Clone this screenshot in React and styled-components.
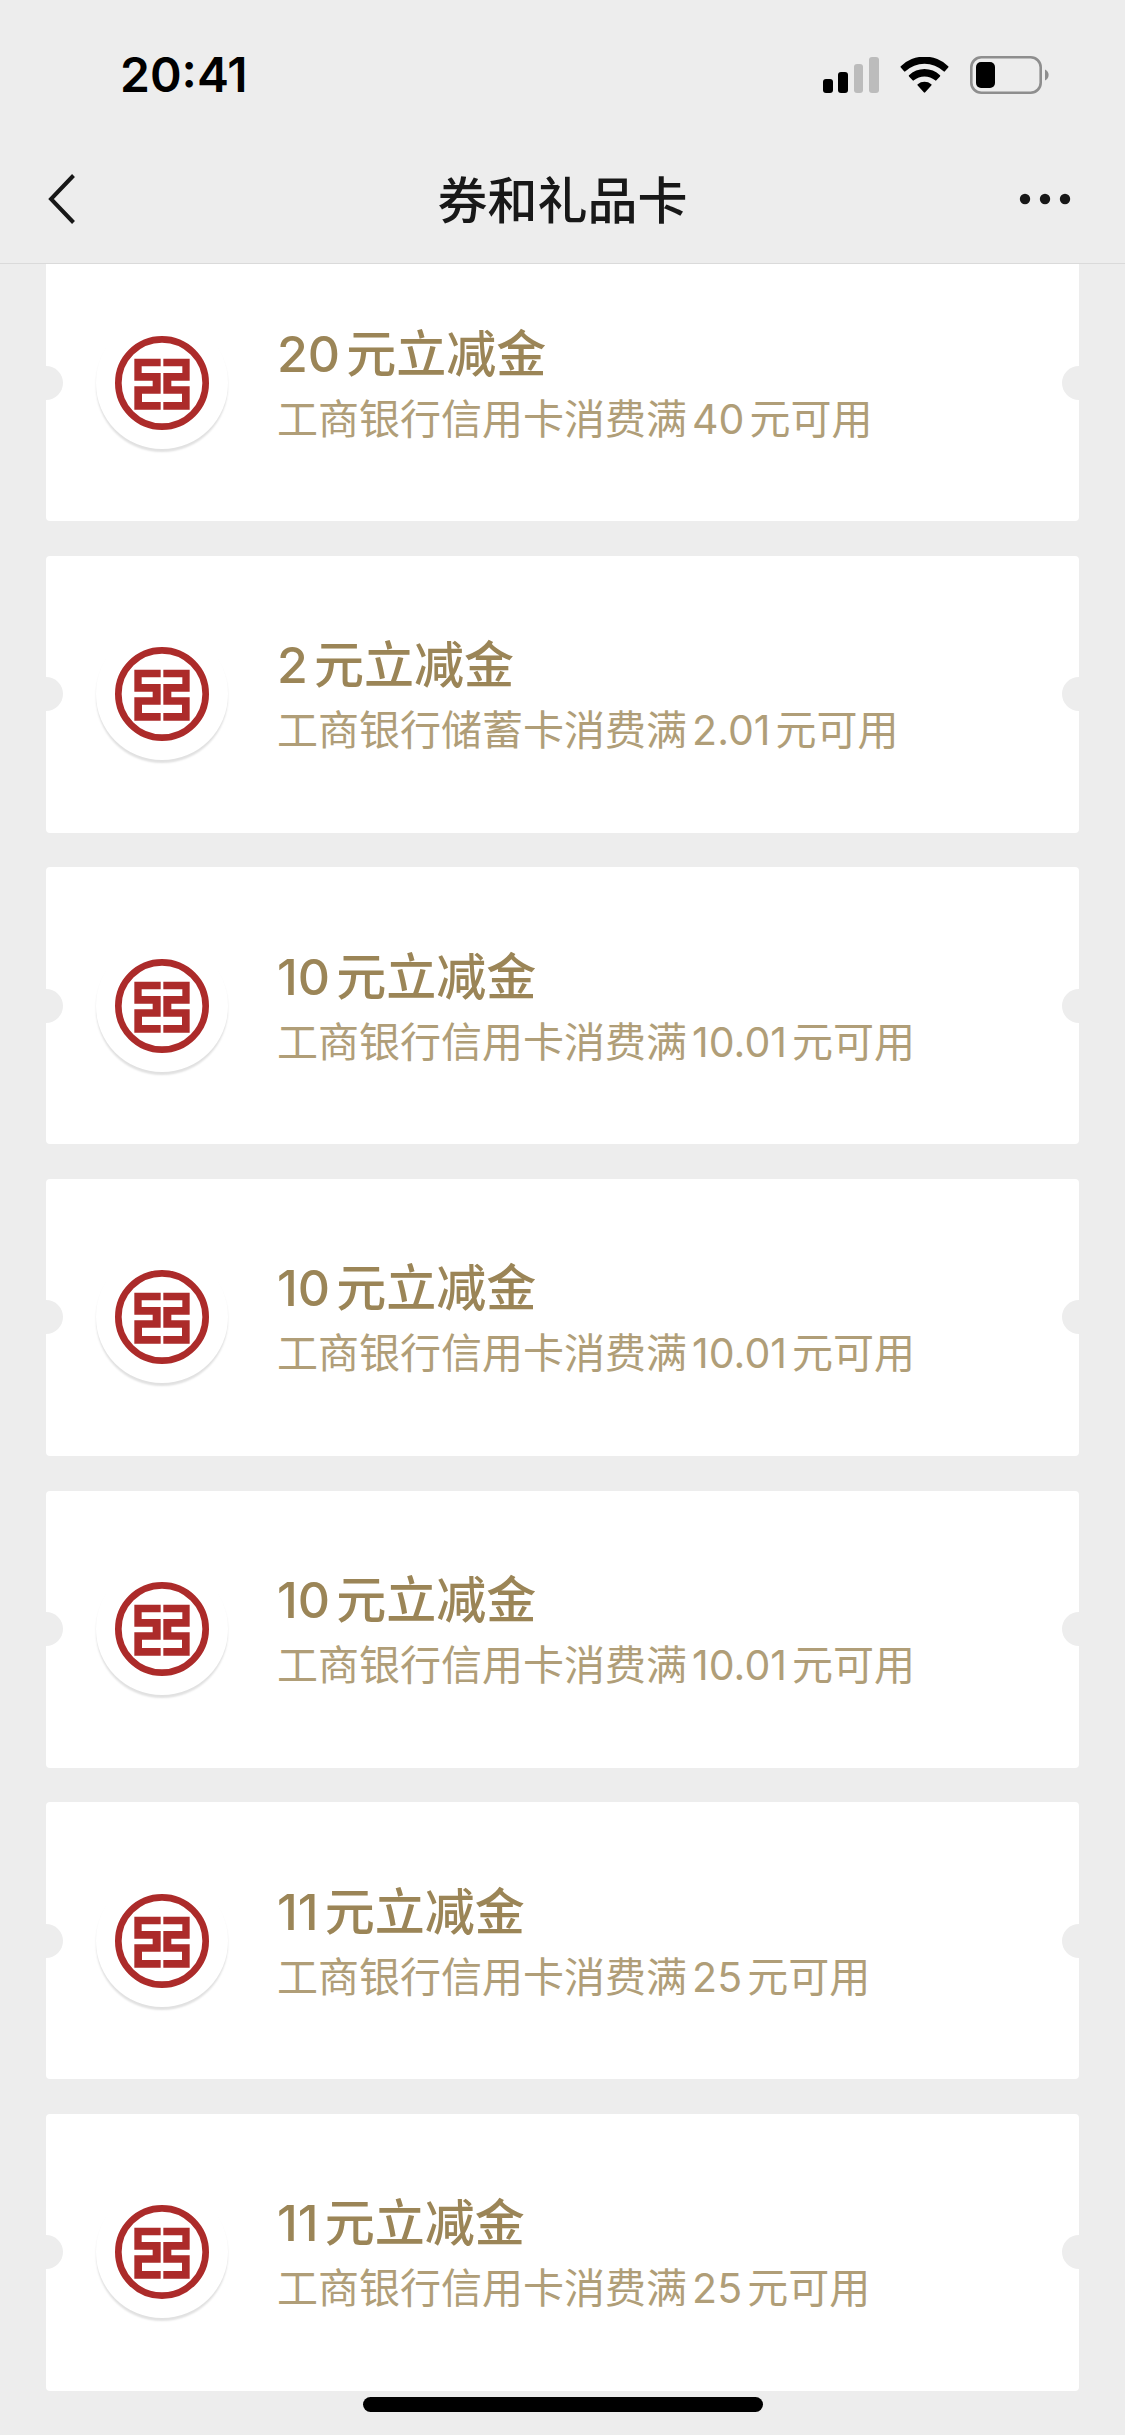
import React from "react";
import styled, { createGlobalStyle } from "styled-components";

const GlobalStyle = createGlobalStyle`
  * { box-sizing: border-box; }
  html, body { margin: 0; padding: 0; }
  body {
    background: #ededed;
    color: #181818;
    font-family: Inter, "Noto Sans CJK SC", sans-serif;
    text-autospace: normal;
  }
`;

const Screen = styled.div`
  display: flex;
  flex-direction: column;
  min-height: 100vh;
  background: #ededed;
`;

const Header = styled.header`
  border-bottom: 1px solid #dadada;
`;

const StatusBar = styled.div`
  display: flex;
  align-items: center;
  justify-content: space-between;
  height: 135px;
  padding: 14px 76px 0 120px;
  color: #000;
`;

const Clock = styled.time`
  font-size: 48px;
  line-height: 60px;
  font-weight: 600;
`;

const StatusIcons = styled.div`
  display: flex;
  align-items: center;
  gap: 21px;

  svg { display: block; }
`;

const NavBar = styled.nav`
  display: grid;
  grid-template-columns: 120px 1fr 120px;
  align-items: center;
  height: 128px;
`;

const NavButton = styled.button`
  display: flex;
  align-items: center;
  justify-content: ${(p) => p.$align};
  height: 100%;
  padding: 0 54px 0 48px;
  border: 0;
  background: none;
  color: #181818;
  cursor: pointer;

  svg { display: block; flex: none; }
`;

const PageTitle = styled.h1`
  margin: 0;
  padding-top: 4px;
  text-align: center;
  font-size: 50px;
  line-height: 64px;
  font-weight: 500;
`;

const CouponList = styled.ul`
  flex: 1;
  display: flex;
  flex-direction: column;
  justify-content: space-between;
  margin: 0;
  padding: 0 46px;
  list-style: none;
  overflow: hidden;
`;

const Coupon = styled.li`
  position: relative;
  display: flex;
  align-items: center;
  gap: 49px;
  height: 277px;
  padding: 0 50px;
  border-radius: 4px;
  background: #fff;
  overflow: hidden;

  &:first-child { margin-top: -20px; }

  &::before,
  &::after {
    content: "";
    position: absolute;
    top: 50%;
    width: 34px;
    height: 34px;
    margin-top: -17px;
    border-radius: 50%;
    background: #ededed;
  }
  &::before { left: -17px; }
  &::after { right: -17px; }
`;

const Badge = styled.div`
  display: flex;
  flex: none;
  align-items: center;
  justify-content: center;
  width: 132px;
  height: 132px;
  border-radius: 50%;
  background: #fff;
  box-shadow: 0 3px 2px rgba(0, 0, 0, 0.12);

  svg { display: block; }
`;

const CouponText = styled.div`
  flex: 1;
  min-width: 0;
  padding-top: 6px;
`;

const CouponTitle = styled.h2`
  margin: 0;
  color: #9b8557;
  font-size: 50px;
  line-height: 66px;
  font-weight: 500;
`;

const CouponRule = styled.p`
  margin: 0;
  color: #b09e78;
  font-size: 41px;
  line-height: 64px;
  font-weight: 400;
`;

const Footer = styled.footer`
  display: flex;
  justify-content: center;
  padding: 6px 0 23px;
`;

const HomeIndicator = styled.div`
  width: 400px;
  height: 15px;
  border-radius: 8px;
  background: #000;
`;

const SignalIcon = () => (
  <svg width="56" height="36" viewBox="0 0 56 36" aria-hidden="true">
    <rect x="0" y="22" width="10" height="14" rx="3" />
    <rect x="15" y="15" width="10" height="21" rx="3" />
    <rect x="31" y="7" width="9" height="29" rx="3" fill="#bcbcbc" />
    <rect x="46" y="0" width="10" height="36" rx="3" fill="#bcbcbc" />
  </svg>
);

const WifiIcon = () => (
  <svg width="49" height="36" viewBox="0 0 49 36" aria-hidden="true">
    <path d="M0.8 9.2a34 34 0 0 1 47.4 0 .8 .8 0 0 1 0 1.2l-3.3 3.9a.9 .9 0 0 1-1.3 0a28 28 0 0 0-38.2 0a.9 .9 0 0 1-1.3 0l-3.3-3.9a.8 .8 0 0 1 0-1.2z" />
    <path d="M9 18.2a22.5 22.5 0 0 1 31 0 .9 .9 0 0 1 0 1.2l-3.6 3.9a.9 .9 0 0 1-1.3 0a16.5 16.5 0 0 0-21.2 0a.9 .9 0 0 1-1.3 0L9 19.4a.9 .9 0 0 1 0-1.2z" />
    <path d="M17.7 27.2a10.8 10.8 0 0 1 13.6 0 .9 .9 0 0 1 0 1.3l-6.1 6.7a.9 .9 0 0 1-1.4 0l-6.1-6.7a.9 .9 0 0 1 0-1.3z" />
  </svg>
);

const BatteryIcon = () => (
  <svg width="79" height="38" viewBox="0 0 79 38" aria-hidden="true">
    <rect x="1.3" y="1.3" width="69.4" height="35.4" rx="10" fill="none" stroke="#8e8e8e" strokeWidth="2.6" />
    <rect x="6" y="6" width="19" height="26" rx="5" />
    <path d="M75 13.5v11a6 6 0 0 0 0-11z" fill="#8e8e8e" />
  </svg>
);

const BackIcon = () => (
  <svg width="28" height="50" viewBox="0 0 28 50" aria-hidden="true">
    <path d="M25.5 1.5L3 25l22.5 23.5" fill="none" stroke="currentColor" strokeWidth="4" />
  </svg>
);

const MoreIcon = () => (
  <svg width="52" height="12" viewBox="0 0 52 12" aria-hidden="true" fill="currentColor">
    <circle cx="6" cy="6" r="5.2" />
    <circle cx="26" cy="6" r="5.2" />
    <circle cx="46" cy="6" r="5.2" />
  </svg>
);

const BankLogo = () => (
  <svg width="94" height="94" viewBox="-141 -141 282 282" role="img" aria-label="工商银行">
    <circle r="131" fill="none" stroke="#ac2b2a" strokeWidth="20" />
    <g fill="#ac2b2a">
      <path d="M-83-73H-4v23H-61v20H-4V32H-60V57H-4V80H-83V10H-28V-7H-83z" />
      <path d="M83-73H4v23H61v20H4V32H60V57H4V80H83V10H28V-7H83z" />
    </g>
  </svg>
);

const coupons = [
  { id: 1, title: "20元立减金", rule: "工商银行信用卡消费满40元可用" },
  { id: 2, title: "2元立减金", rule: "工商银行储蓄卡消费满2.01元可用" },
  { id: 3, title: "10元立减金", rule: "工商银行信用卡消费满10.01元可用" },
  { id: 4, title: "10元立减金", rule: "工商银行信用卡消费满10.01元可用" },
  { id: 5, title: "10元立减金", rule: "工商银行信用卡消费满10.01元可用" },
  { id: 6, title: "11元立减金", rule: "工商银行信用卡消费满25元可用" },
  { id: 7, title: "11元立减金", rule: "工商银行信用卡消费满25元可用" },
];

export default function App() {
  return (
    <Screen lang="zh-CN">
      <GlobalStyle />
      <Header>
        <StatusBar>
          <Clock>20:41</Clock>
          <StatusIcons>
            <SignalIcon />
            <WifiIcon />
            <BatteryIcon />
          </StatusIcons>
        </StatusBar>
        <NavBar>
          <NavButton $align="flex-start" aria-label="返回">
            <BackIcon />
          </NavButton>
          <PageTitle>券和礼品卡</PageTitle>
          <NavButton $align="flex-end" aria-label="更多">
            <MoreIcon />
          </NavButton>
        </NavBar>
      </Header>
      <CouponList>
        {coupons.map((c) => (
          <Coupon key={c.id}>
            <Badge>
              <BankLogo />
            </Badge>
            <CouponText>
              <CouponTitle>{c.title}</CouponTitle>
              <CouponRule>{c.rule}</CouponRule>
            </CouponText>
          </Coupon>
        ))}
      </CouponList>
      <Footer>
        <HomeIndicator />
      </Footer>
    </Screen>
  );
}
